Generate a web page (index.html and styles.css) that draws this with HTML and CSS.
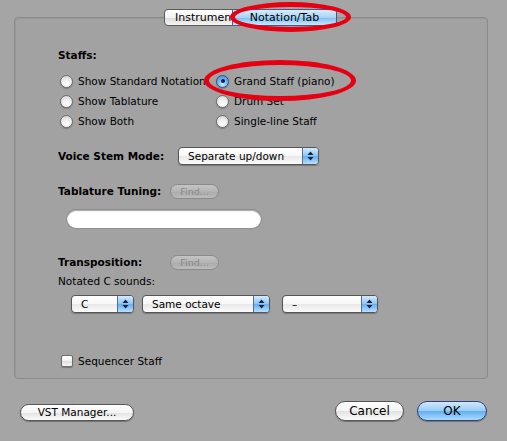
FILE: index.html
```html
<!DOCTYPE html>
<html>
<head>
<meta charset="utf-8">
<link rel="stylesheet" href="styles.css">
</head>
<body>
<div class="window">
  <div class="panel">
    <div class="tabs">
      <div class="tab first">Instrumen</div>
      <div class="tab sel">Notation/Tab</div>
    </div>
    <div class="content">
      <div class="label bold staffs">Staffs:</div>
      <div class="radios">
        <div class="ropt"><span class="radio"></span>Show Standard Notation</div>
        <div class="ropt"><span class="radio on"></span>Grand Staff (piano)</div>
        <div class="ropt"><span class="radio"></span>Show Tablature</div>
        <div class="ropt"><span class="radio"></span>Drum Set</div>
        <div class="ropt"><span class="radio"></span>Show Both</div>
        <div class="ropt"><span class="radio"></span>Single-line Staff</div>
      </div>
      <div class="row voice">
        <div class="label bold rlabel">Voice Stem Mode:</div>
        <div class="popup w140"><span class="ptext">Separate up/down</span><span class="arrows"><svg width="7" height="10" viewBox="0 0 7 10"><path d="M3.5 0.5 L6.5 4 L0.5 4 Z M0.5 6 L6.5 6 L3.5 9.5 Z" fill="#1a2440"/></svg></span></div>
      </div>
      <div class="row tuning">
        <div class="label bold rlabel2">Tablature Tuning:</div>
        <div class="find">Find...</div>
      </div>
      <div class="field"></div>
      <div class="row transp">
        <div class="label bold rlabel2">Transposition:</div>
        <div class="find">Find...</div>
      </div>
      <div class="label notated">Notated C sounds:</div>
      <div class="row pops">
        <div class="popup w63"><span class="ptext">C</span><span class="arrows"><svg width="7" height="10" viewBox="0 0 7 10"><path d="M3.5 0.5 L6.5 4 L0.5 4 Z M0.5 6 L6.5 6 L3.5 9.5 Z" fill="#1a2440"/></svg></span></div>
        <div class="popup w128"><span class="ptext">Same octave</span><span class="arrows"><svg width="7" height="10" viewBox="0 0 7 10"><path d="M3.5 0.5 L6.5 4 L0.5 4 Z M0.5 6 L6.5 6 L3.5 9.5 Z" fill="#1a2440"/></svg></span></div>
        <div class="popup w96"><span class="ptext">–</span><span class="arrows"><svg width="7" height="10" viewBox="0 0 7 10"><path d="M3.5 0.5 L6.5 4 L0.5 4 Z M0.5 6 L6.5 6 L3.5 9.5 Z" fill="#1a2440"/></svg></span></div>
      </div>
      <div class="row check">
        <span class="checkbox"></span><span class="label">Sequencer Staff</span>
      </div>
    </div>
  </div>
  <div class="footer">
    <div class="btn vst">VST Manager...</div>
    <div class="spacer"></div>
    <div class="btn cancel">Cancel</div>
    <div class="btn ok">OK</div>
  </div>
  <div class="ring ring1"></div>
  <div class="ring ring2"></div>
</div>
</body>
</html>
```
FILE: styles.css
```css
html, body {
  margin: 0;
  padding: 0;
  background: #a5a5a5;
}
.window {
  position: relative;
  width: 507px;
  height: 441px;
  background: #a5a5a5;
  font-family: "DejaVu Sans", "Liberation Sans", sans-serif;
  color: #000;
  overflow: hidden;
}
.panel {
  box-sizing: border-box;
  margin: 17px 0 0 14px;
  width: 474px;
  height: 362px;
  border: 1px solid #8c8c8c;
  border-radius: 4px;
  background: #a2a2a2;
  box-shadow: inset 1px 1px 0 #999;
  display: flex;
  flex-direction: column;
}
.tabs {
  display: flex;
  justify-content: flex-start;
  margin: -9px 0 0 149px;
  height: 17px;
}
.tab {
  box-sizing: border-box;
  height: 17px;
  font-size: 11px;
  line-height: 15px;
  text-align: center;
  border: 1px solid #5a5a5a;
  white-space: nowrap;
  overflow: hidden;
}
.tab.first {
  width: 69px;
  border-radius: 4px 0 0 4px;
  background: linear-gradient(#ffffff, #f2f2f2 50%, #dcdcdc 51%, #f4f4f4);
  padding-left: 10px;
  text-align: left;
}
.tab.sel {
  width: 104px;
  border-left: none;
  border-radius: 0 4px 4px 0;
  border-color: #4a5680;
  background: linear-gradient(#d6ecfc, #a9d3f6 50%, #7ebcf0 51%, #c6e8ff);
}
.content {
  padding-left: 43px;
  display: flex;
  flex-direction: column;
}
.label {
  font-size: 10.5px;
  line-height: 14px;
  white-space: nowrap;
}
.bold { font-weight: bold; }
.staffs { margin-top: 22px; }
.radios {
  margin-top: 9px;
  display: grid;
  grid-template-columns: 156px auto;
  grid-auto-rows: 20px;
}
.ropt {
  display: flex;
  align-items: center;
  font-size: 10.5px;
  white-space: nowrap;
}
.radio {
  box-sizing: border-box;
  width: 13px;
  height: 13px;
  margin: 0 5px 0 2px;
  border-radius: 50%;
  border: 1px solid #6e6e6e;
  background: radial-gradient(circle at 50% 75%, #ffffff, #f0f0f0 45%, #cfcfcf);
  box-shadow: 0 1px 1px rgba(0,0,0,0.25);
  position: relative;
  flex: none;
}
.radio.on {
  border-color: #3b4c86;
  background: radial-gradient(circle at 50% 75%, #c8ecff, #6fb4ee 50%, #3d86d8);
}
.radio.on::after {
  content: "";
  position: absolute;
  left: 3.5px;
  top: 3.5px;
  width: 4px;
  height: 4px;
  border-radius: 50%;
  background: #15213a;
}
.row {
  display: flex;
  align-items: center;
}
.voice { margin-top: 16px; height: 18px; }
.rlabel { width: 120px; }
.rlabel2 { width: 112px; }
.popup {
  box-sizing: border-box;
  height: 18px;
  border: 1px solid #555;
  border-radius: 4px;
  background: linear-gradient(#ffffff, #f7f7f7 50%, #e8e8e8 51%, #fbfbfb);
  box-shadow: 0 1px 1px rgba(0,0,0,0.25);
  display: flex;
  align-items: stretch;
  overflow: hidden;
}
.ptext {
  flex: 1;
  font-size: 10.5px;
  line-height: 16px;
  padding-left: 9px;
  white-space: nowrap;
}
.arrows {
  width: 15px;
  border-left: 1px solid #5c6a9a;
  background: linear-gradient(#d2eaff, #8cc6f4 50%, #66aeee 51%, #b8e0ff);
  display: flex;
  align-items: center;
  justify-content: center;
}
.w140 { width: 141px; }
.w63 { width: 63px; }
.w128 { width: 128px; margin-left: 8px; }
.w96 { width: 96px; margin-left: 12px; }
.tuning { margin-top: 17px; height: 18px; }
.find {
  box-sizing: border-box;
  width: 49px;
  height: 15px;
  border: 1px solid #8a8a8a;
  border-radius: 8px;
  background: linear-gradient(#c4c4c4, #b4b4b4 50%, #aaaaaa 51%, #bcbcbc);
  color: #888;
  font-size: 9.5px;
  line-height: 13px;
  text-align: center;
}
.field {
  margin: 10px 0 0 9px;
  width: 194px;
  height: 18px;
  border-radius: 9px;
  background: #fff;
  box-shadow: inset 0 1px 1px rgba(0,0,0,0.35), 0 0 0 1px #8e8e8e;
}
.transp { margin-top: 25px; height: 18px; }
.notated { margin-top: 3px; }
.pops { margin-top: 7px; margin-left: 13px; height: 18px; }
.check { margin-top: 41px; height: 14px; }
.checkbox {
  box-sizing: border-box;
  width: 12px;
  height: 12px;
  margin: 0 5px 0 3px;
  border: 1px solid #6e6e6e;
  border-radius: 2px;
  background: linear-gradient(#ffffff, #f2f2f2 50%, #dedede 51%, #f6f6f6);
  box-shadow: 0 1px 1px rgba(0,0,0,0.25);
}
.footer {
  display: flex;
  align-items: center;
  margin-top: 22px;
  padding: 0 20px;
  height: 20px;
}
.spacer { flex: 1; }
.btn {
  box-sizing: border-box;
  border: 1px solid #555;
  background: linear-gradient(#ffffff, #f4f4f4 50%, #e2e2e2 51%, #fbfbfb);
  box-shadow: 0 1px 1px rgba(0,0,0,0.3);
  text-align: center;
  white-space: nowrap;
}
.vst {
  width: 114px;
  height: 17px;
  border-radius: 9px;
  font-size: 10.5px;
  line-height: 15px;
  margin-top: 3px;
}
.cancel {
  width: 69px;
  height: 20px;
  border-radius: 10px;
  font-size: 12px;
  line-height: 18px;
}
.ok {
  width: 70px;
  height: 20px;
  margin-left: 13px;
  border-radius: 10px;
  font-size: 12px;
  line-height: 18px;
  border-color: #343f7c;
  background: linear-gradient(#cfe8fc, #97ccf6 50%, #62aeee 51%, #a9dcff);
}
.ring {
  position: absolute;
  box-sizing: border-box;
  border: 5px solid #e60012;
  border-radius: 50%;
}
.ring1 { left: 230px; top: 2px; width: 121px; height: 30px; }
.ring2 { left: 204px; top: 60px; width: 152px; height: 41px; }
```
